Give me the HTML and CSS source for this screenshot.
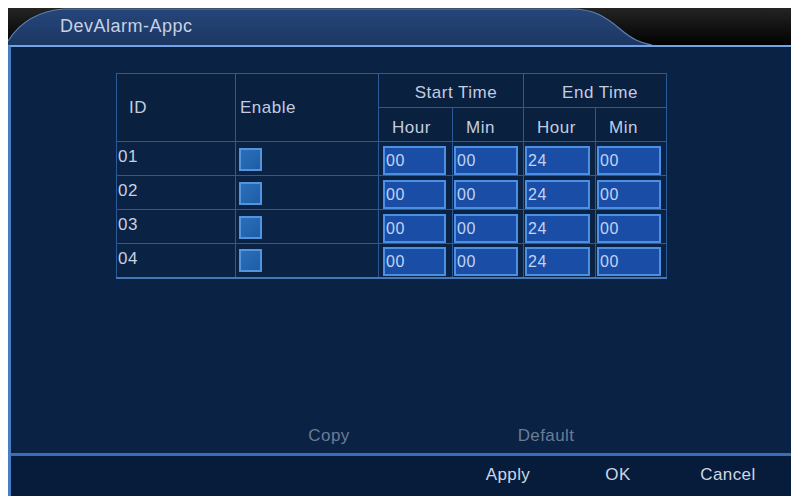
FILE: index.html
```html
<!DOCTYPE html>
<html lang="en">

<head>
    <meta charset="UTF-8">
    <meta name="viewport" content="width=device-width, initial-scale=1.0">
    <title>DevAlarm-Appc</title>
    <link rel="stylesheet" href="styles.css">
</head>

<body>
    <div class="window">
        <!-- title bar with the rounded tab -->
        <div class="titlebar">
            <svg class="tab" width="783" height="37" viewBox="0 0 783 37">
                <defs>
                    <linearGradient id="tabfill" x1="0" y1="0" x2="0" y2="1">
                        <stop offset="0" stop-color="#26467a" />
                        <stop offset="1" stop-color="#1b3762" />
                    </linearGradient>
                </defs>
                <path d="M0,37 L0,33 C12,14 30,3 56,1 L563,1 C586,1 598,9 612,21 C624,31 632,35 644,37 Z" fill="url(#tabfill)" />
                <path d="M0,33 C12,14 30,3 56,1 L563,1 C586,1 598,9 612,21 C624,31 632,35 644,37" fill="none" stroke="#5f80b4" stroke-width="1.2" />
            </svg>
            <span class="title">DevAlarm-Appc</span>
        </div>

        <div class="main">
            <div class="content">
                <table class="sched">
                    <colgroup>
                        <col class="c-id">
                        <col class="c-en">
                        <col class="c-hour">
                        <col class="c-min">
                        <col class="c-hour2">
                        <col class="c-min2">
                    </colgroup>
                    <tr class="head1">
                        <th rowspan="2" class="th-id">ID</th>
                        <th rowspan="2" class="th-en">Enable</th>
                        <th colspan="2" class="th-grp">Start Time</th>
                        <th colspan="2" class="th-grp">End Time</th>
                    </tr>
                    <tr class="head2">
                        <th class="th-sub">Hour</th>
                        <th class="th-sub">Min</th>
                        <th class="th-sub">Hour</th>
                        <th class="th-sub">Min</th>
                    </tr>
                    <tr>
                        <td class="id">01</td>
                        <td><span class="check"></span></td>
                        <td><span class="field first">00</span></td>
                        <td><span class="field">00</span></td>
                        <td><span class="field">24</span></td>
                        <td><span class="field">00</span></td>
                    </tr>
                    <tr>
                        <td class="id">02</td>
                        <td><span class="check"></span></td>
                        <td><span class="field first">00</span></td>
                        <td><span class="field">00</span></td>
                        <td><span class="field">24</span></td>
                        <td><span class="field">00</span></td>
                    </tr>
                    <tr>
                        <td class="id">03</td>
                        <td><span class="check"></span></td>
                        <td><span class="field first">00</span></td>
                        <td><span class="field">00</span></td>
                        <td><span class="field">24</span></td>
                        <td><span class="field">00</span></td>
                    </tr>
                    <tr>
                        <td class="id">04</td>
                        <td><span class="check"></span></td>
                        <td><span class="field first">00</span></td>
                        <td><span class="field">00</span></td>
                        <td><span class="field">24</span></td>
                        <td><span class="field">00</span></td>
                    </tr>
                </table>
            </div>

            <div class="tools">
                <span class="btn off">Copy</span>
                <span class="btn off">Default</span>
            </div>

            <div class="footer">
                <span class="btn">Apply</span>
                <span class="btn">OK</span>
                <span class="btn">Cancel</span>
            </div>
        </div>
    </div>
</body>

</html>
```

FILE: styles.css
```css
* {
    margin: 0;
    padding: 0;
    box-sizing: border-box;
}

body {
    background: #fff;
    font-family: "Liberation Sans", Arial, sans-serif;
    color: #c9d3e4;
}

.window {
    margin: 8px 0 0 8px;
    width: 783px;
    height: 488px;
    display: flex;
    flex-direction: column;
}

/* title bar */
.titlebar {
    position: relative;
    height: 37px;
    background: linear-gradient(#242424, #141414 45%, #020202);
}

.tab {
    position: absolute;
    left: 0;
    top: 0;
}

.title {
    position: relative;
    display: block;
    padding-left: 52px;
    line-height: 36px;
    font-size: 18px;
    letter-spacing: 0.5px;
    color: #c6d2e6;
}

/* body of the dialog */
.main {
    flex: 1;
    display: flex;
    flex-direction: column;
    border-top: 2px solid #74a2e6;
    border-left: 3px solid #4a7cc4;
    background: #0a2244;
}

.content {
    flex: 1;
    padding: 26px 0 0 105px;
}

/* schedule table */
.sched {
    border-collapse: collapse;
    table-layout: fixed;
    width: 551px;
    font-size: 17px;
    letter-spacing: 0.5px;
}

.c-id {
    width: 119px;
}

.c-en {
    width: 143px;
}

.c-hour {
    width: 74px;
}

.c-min {
    width: 71px;
}

.c-hour2 {
    width: 72px;
}

.c-min2 {
    width: 71px;
}

.sched th,
.sched td {
    border: 1px solid #2c5a98;
    font-weight: normal;
    text-align: left;
    vertical-align: middle;
    padding: 0;
}

.sched th {
    background: #09203f;
    color: #c3cde0;
}

.head1 {
    height: 35px;
}

.head2 {
    height: 34px;
}

.sched tr {
    height: 34px;
}

.th-id {
    padding-left: 12px !important;
}

.th-en {
    padding-left: 4px !important;
}

.th-grp {
    text-align: center !important;
    padding: 5px 0 0 10px !important;
}

.th-sub {
    padding: 6px 0 0 13px !important;
}

.sched tr:last-child td {
    border-bottom: 2px solid #4677b6;
}

.sched td.id {
    vertical-align: top;
    padding: 5px 0 0 1px;
    color: #c6d0e2;
}

.check {
    display: block;
    width: 23px;
    height: 23px;
    margin: 1px 0 0 3px;
    border: 2px solid #5295de;
    background: linear-gradient(135deg, #2a6fba, #1f5da4);
}

.field {
    display: block;
    height: 29px;
    margin: 3px 5px 0 1px;
    padding-left: 1px;
    line-height: 26px;
    border: 2px solid #4d8fe0;
    background: #1a4ea6;
    color: #c0d4f2;
    font-size: 16px;
}

.field.first {
    margin: 3px 6px 0 4px;
}

/* buttons */
.tools {
    height: 30px;
    display: flex;
    padding-left: 263px;
    gap: 107px;
}

.btn {
    width: 110px;
    text-align: center;
    font-size: 17px;
    letter-spacing: 0.4px;
    line-height: 26px;
}

.off {
    color: #6b7c96;
}

.footer {
    height: 43px;
    display: flex;
    justify-content: flex-end;
    padding-right: 8px;
    border-top: 3px solid #3a6db3;
    background: #071c3a;
}

.footer .btn {
    line-height: 38px;
    color: #cdd6e6;
}
```
